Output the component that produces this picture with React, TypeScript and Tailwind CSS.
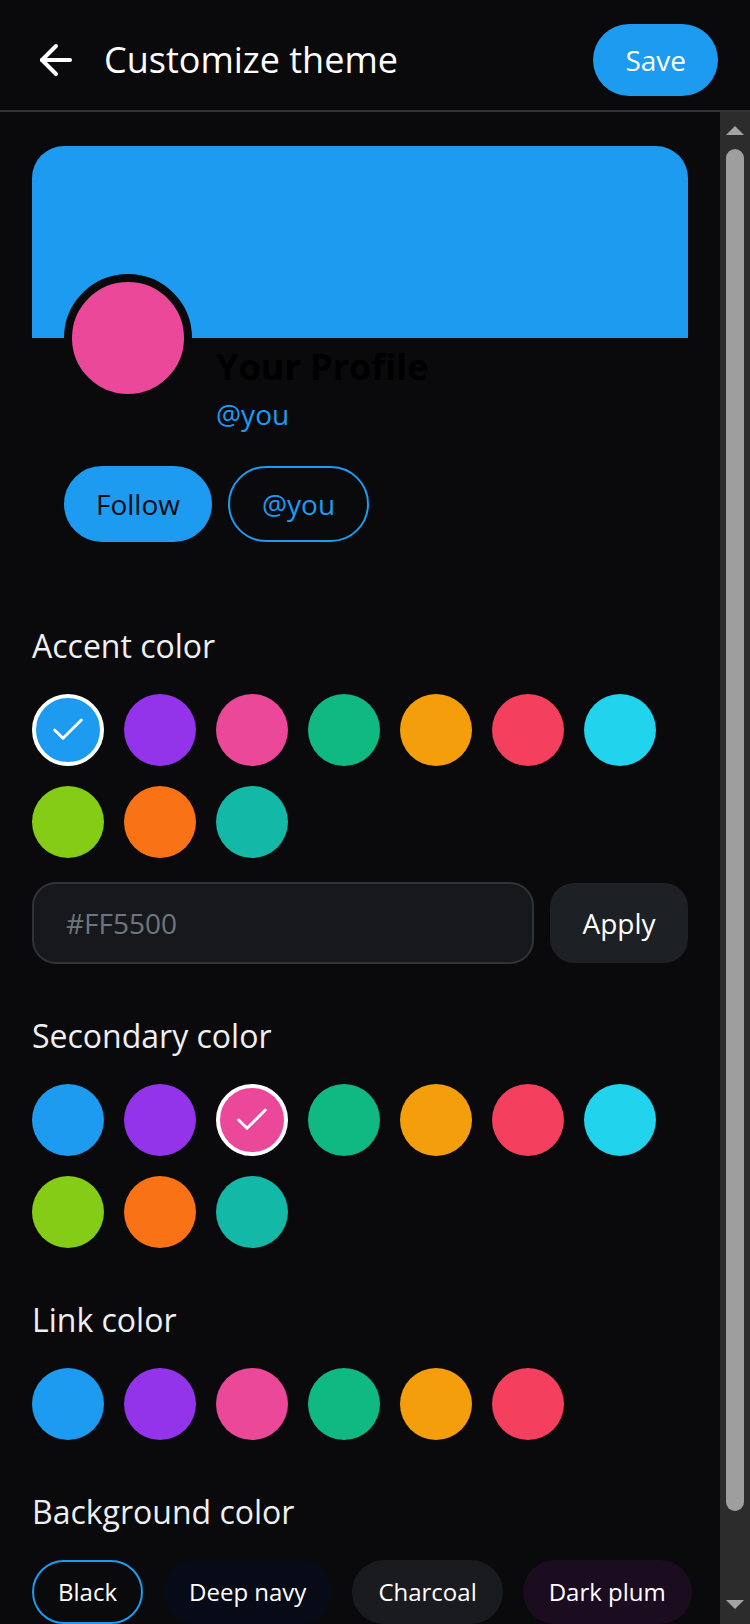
import { ArrowLeft, Check } from 'lucide-react';

const palette = [
  { name: 'blue', cls: 'bg-[#1d9bf0]' },
  { name: 'purple', cls: 'bg-[#9333ea]' },
  { name: 'pink', cls: 'bg-[#ec4899]' },
  { name: 'green', cls: 'bg-[#10b981]' },
  { name: 'amber', cls: 'bg-[#f59e0b]' },
  { name: 'rose', cls: 'bg-[#f43f5e]' },
  { name: 'cyan', cls: 'bg-[#22d3ee]' },
  { name: 'lime', cls: 'bg-[#84cc16]' },
  { name: 'orange', cls: 'bg-[#f97316]' },
  { name: 'teal', cls: 'bg-[#14b8a6]' },
];

const backgrounds = [
  { label: 'Black', cls: 'border-[#1d9bf0] bg-[#0a0a0c]' },
  { label: 'Deep navy', cls: 'border-transparent bg-[#060b17]' },
  { label: 'Charcoal', cls: 'border-transparent bg-[#1a1b1e]' },
  { label: 'Dark plum', cls: 'border-transparent bg-[#1b0c1f]' },
];

const Swatches = ({ count, selected }: { count: number; selected?: string }) => (
  <div className="flex flex-wrap gap-5">
    {palette.slice(0, count).map((c) => (
      <button
        key={c.name}
        aria-label={c.name}
        className={
          selected === c.name
            ? `flex h-[72px] w-[72px] items-center justify-center rounded-full border-4 border-white ${c.cls}`
            : `h-[72px] w-[72px] rounded-full ${c.cls}`
        }
      >
        {selected === c.name && <Check size={40} strokeWidth={1.75} className="text-white" />}
      </button>
    ))}
  </div>
);

const SectionTitle = ({ children }: { children: string }) => (
  <h2 className="mb-6 text-[32px] leading-[48px] text-[#eef0f1]">{children}</h2>
);

const Scrollbar = () => (
  <div className="flex w-[30px] shrink-0 flex-col items-center bg-[#2c2c2c] pt-[14px] pb-[15px]">
    <div className="h-0 w-0 border-x-[9px] border-b-[9px] border-x-transparent border-b-[#a3a3a3]" />
    <div className="mt-[14px] h-[1362px] w-[18px] rounded-full bg-[#9e9e9e]" />
    <div className="flex-1" />
    <div className="h-0 w-0 border-x-[9px] border-t-[9px] border-x-transparent border-t-[#a3a3a3]" />
  </div>
);

export default function App() {
  return (
    <div className="flex h-[1624px] w-[750px] flex-col overflow-hidden bg-[#0a0a0c] font-['Open_Sans','Noto_Sans',sans-serif] text-white">
      <header className="flex shrink-0 items-center justify-between border-b-2 border-[#2f3336] px-8 pt-6 pb-[14px]">
        <div className="flex items-center gap-6">
          <button aria-label="Back" className="flex h-12 w-12 items-center justify-center">
            <ArrowLeft size={48} strokeWidth={2} />
          </button>
          <h1 className="text-[36px] leading-[48px]">Customize theme</h1>
        </div>
        <button className="rounded-full bg-[#1d9bf0] px-8 py-[15px] text-[28px] leading-[42px] text-white">Save</button>
      </header>

      <div className="flex min-h-0 flex-1">
        <main className="flex-1 overflow-hidden px-8 pt-[34px]">
          {/* preview card */}
          <section className="pb-8">
            <div className="h-[192px] rounded-t-[32px] bg-[#1d9bf0]" />
            <div className="px-8">
              <div className="flex items-start gap-6">
                <div className="-mt-16 h-32 w-32 shrink-0 rounded-full border-8 border-[#0a0a0c] bg-[#ec4899]" />
                <div className="pt-[2px]">
                  <p className="text-[36px] font-bold leading-[54px] text-black">Your Profile</p>
                  <p className="text-[28px] leading-[40px] text-[#1d9bf0]">@you</p>
                </div>
              </div>
              <div className="mt-8 flex gap-4">
                <button className="rounded-full border-2 border-[#1d9bf0] bg-[#1d9bf0] px-[30px] py-[15px] text-[28px] leading-[42px] text-[#0a0a0c]">
                  Follow
                </button>
                <button className="rounded-full border-2 border-[#1d9bf0] px-8 py-[15px] text-[28px] leading-[42px] text-[#1d9bf0]">
                  @you
                </button>
              </div>
            </div>
          </section>

          <section className="mt-12">
            <SectionTitle>Accent color</SectionTitle>
            <Swatches count={10} selected="blue" />
            <div className="mt-6 flex items-center gap-4">
              <input
                placeholder="#FF5500"
                className="h-[82px] min-w-0 flex-1 rounded-3xl border-2 border-[#2f3336] bg-[#16181c] px-8 text-[28px] text-white outline-none placeholder:text-[#6e767d]"
              />
              <button className="h-[80px] w-[138px] rounded-3xl bg-[#1d2024] text-[28px] text-white">Apply</button>
            </div>
          </section>

          <section className="mt-12">
            <SectionTitle>Secondary color</SectionTitle>
            <Swatches count={10} selected="pink" />
          </section>

          <section className="mt-12">
            <SectionTitle>Link color</SectionTitle>
            <Swatches count={6} />
          </section>

          <section className="mt-12 pb-12">
            <SectionTitle>Background color</SectionTitle>
            <div className="flex gap-5">
              {backgrounds.map((b) => (
                <button
                  key={b.label}
                  className={`shrink-0 whitespace-nowrap rounded-full border-2 px-6 py-3 text-[24px] leading-[36px] text-white ${b.cls}`}
                >
                  {b.label}
                </button>
              ))}
            </div>
          </section>
        </main>
        <Scrollbar />
      </div>
    </div>
  );
}
